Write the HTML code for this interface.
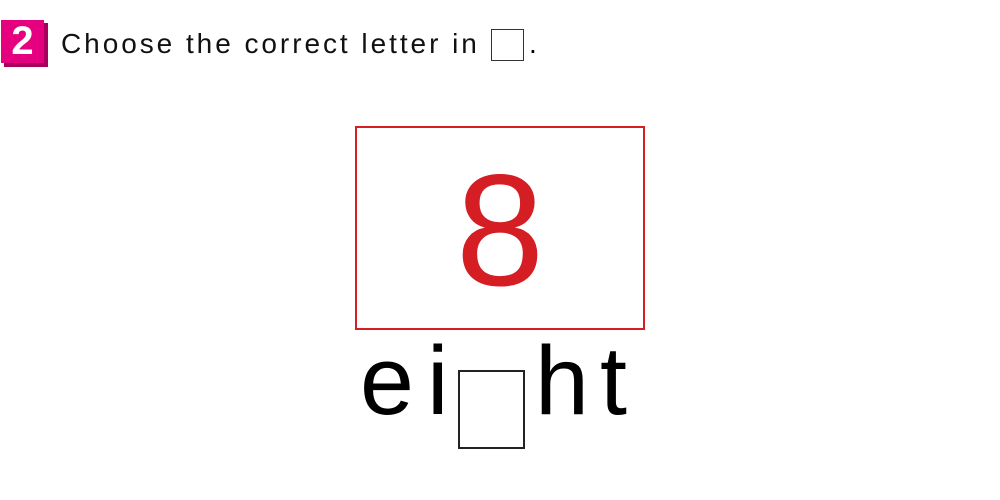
<!DOCTYPE html>
<html><head><meta charset="utf-8"><style>
body{margin:0;width:1000px;height:500px;background:#fff;position:relative;overflow:hidden;font-family:"Liberation Sans","DejaVu Sans",sans-serif;}
.a{position:absolute}
.l{font-size:97px;line-height:106px;color:#000;top:328px}
</style></head><body>
<div class="a" style="left:4px;top:23px;width:44px;height:44px;background:#a8005c"></div>
<div class="a" style="left:1px;top:20px;width:43px;height:43px;background:#e4007f;color:#fff;font-weight:bold;font-size:40px;line-height:43px;text-align:center">2</div>
<div class="a" style="left:61px;top:26px;font-size:28px;line-height:36px;color:#111;letter-spacing:2.95px;white-space:nowrap">Choose the correct letter in</div>
<div class="a" style="left:491px;top:29px;width:31px;height:30px;border:1.5px solid #333"></div>
<div class="a" style="left:529px;top:26px;font-size:28px;line-height:36px">.</div>
<div class="a" style="left:355px;top:126px;width:286px;height:200px;border:2px solid #d41e24"></div>
<div class="a" style="left:355px;top:151px;width:290px;text-align:center;color:#d41e24;font-size:159px;line-height:159px">8</div>
<div class="a l" style="left:360px">e</div>
<div class="a l" style="left:427px">i</div>
<div class="a" style="left:458px;top:370px;width:63px;height:75px;border:2px solid #222"></div>
<div class="a l" style="left:535px">h</div>
<div class="a l" style="left:600px">t</div>
</body></html>
